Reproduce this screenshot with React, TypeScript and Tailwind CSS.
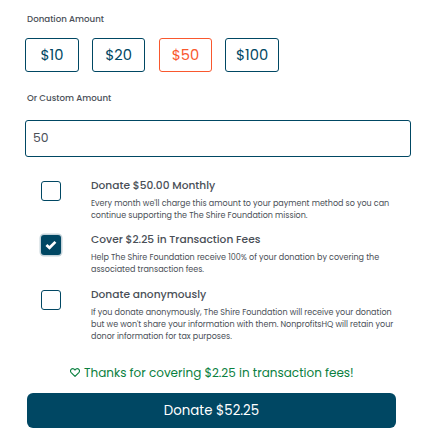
import React from "react";

const amounts = [
  { label: "$10", box: "w-[54px] mr-[13px]" },
  { label: "$20", box: "w-[53px] mr-[14px]" },
  { label: "$50", box: "w-[53px] mr-[13px]", active: true },
  { label: "$100", box: "w-[54px]" },
];

const options: { title: string; checked?: boolean; row: string; lines: string[] }[] = [
  {
    title: "Donate $50.00 Monthly",
    row: "h-[54px]",
    lines: [
      "Every month we'll charge this amount to your payment method so you can",
      "continue supporting the The Shire Foundation mission.",
    ],
  },
  {
    title: "Cover $2.25 in Transaction Fees",
    checked: true,
    row: "h-[55px]",
    lines: [
      "Help The Shire Foundation receive 100% of your donation by covering the",
      "associated transaction fees.",
    ],
  },
  {
    title: "Donate anonymously",
    row: "h-[66px]",
    lines: [
      "If you donate anonymously, The Shire Foundation will receive your donation",
      "but we won't share your information with them. NonprofitsHQ will retain your",
      "donor information for tax purposes.",
    ],
  },
];

function Checkbox({ checked }: { checked?: boolean }) {
  return checked ? (
    <span className="mt-px flex size-5 items-center justify-center rounded-[3px] bg-[#004763] shadow-[0_0_0_1.5px_#c5d3da]">
      <svg viewBox="0 0 12 10" className="h-[10px] w-[12px]" fill="none" stroke="white" strokeWidth="2.7">
        <path d="M1.4 4.9 4.5 7.8 10.4 1.9" />
      </svg>
    </span>
  ) : (
    <span className="mt-px size-5 rounded-[3px] border border-[#004763]" />
  );
}

export default function App() {
  return (
    <main className="h-[436px] w-[423px] overflow-hidden bg-white pl-[25px] pt-[13px] font-['Poppins','Inter',sans-serif] text-[#4a4f57] antialiased">
      <h2 className="pl-[2px] text-[8.67px] font-medium leading-[12px] whitespace-nowrap">Donation Amount</h2>
      <div className="mt-[13px] flex">
        {amounts.map((a) => (
          <button
            key={a.label}
            className={`flex h-[34px] items-center justify-center rounded-[3px] border text-[14.67px] leading-[22px] pb-px ${a.box} ${
              a.active ? "border-[#f9582e] text-[#f9582e]" : "border-[#004763] text-[#004763]"
            }`}
          >
            {a.label}
          </button>
        ))}
      </div>
      <h2 className="mt-[20px] pl-[2px] text-[8.67px] font-medium leading-[12px] whitespace-nowrap">Or Custom Amount</h2>
      <div className="mt-[16px] flex h-[37px] w-[386px] items-center rounded-[3px] border border-[#004763] pl-[7px] text-[12.4px]">
        50
      </div>
      <section className="pt-[23px]">
        {options.map((o) => (
          <div key={o.title} className={`flex pl-4 ${o.row}`}>
            <Checkbox checked={o.checked} />
            <div className="ml-[30px] whitespace-nowrap">
              <h3 className="text-[10.65px] font-medium leading-[11px]">{o.title}</h3>
              <div className="mt-[7px] text-[8px] leading-[12px]">
                {o.lines.map((l) => (
                  <p key={l}>{l}</p>
                ))}
              </div>
            </div>
          </div>
        ))}
      </section>
      <p className="mt-[10px] flex items-center pl-[45px] text-[12px] leading-[16px] text-[#0a8040] whitespace-nowrap">
        <svg viewBox="0 0 10 9" className="mr-[4px] mb-[2px] h-[9px] w-[10px]" fill="none" stroke="currentColor" strokeWidth="1.15">
          <path d="M5 8.4 1.2 4.6C-.3 2.9.9.6 2.7.6 3.9.6 4.6 1.4 5 2 5.4 1.4 6.1.6 7.3.6 9.1.6 10.3 2.9 8.8 4.6Z" />
        </svg>
        <span>Thanks for covering $2.25 in transaction fees!</span>
      </p>
      <button className="ml-[2px] mt-[12px] flex h-[35px] w-[369px] items-center justify-center rounded-[6px] bg-[#004763] text-[13.33px] text-white">
        Donate $52.25
      </button>
    </main>
  );
}
